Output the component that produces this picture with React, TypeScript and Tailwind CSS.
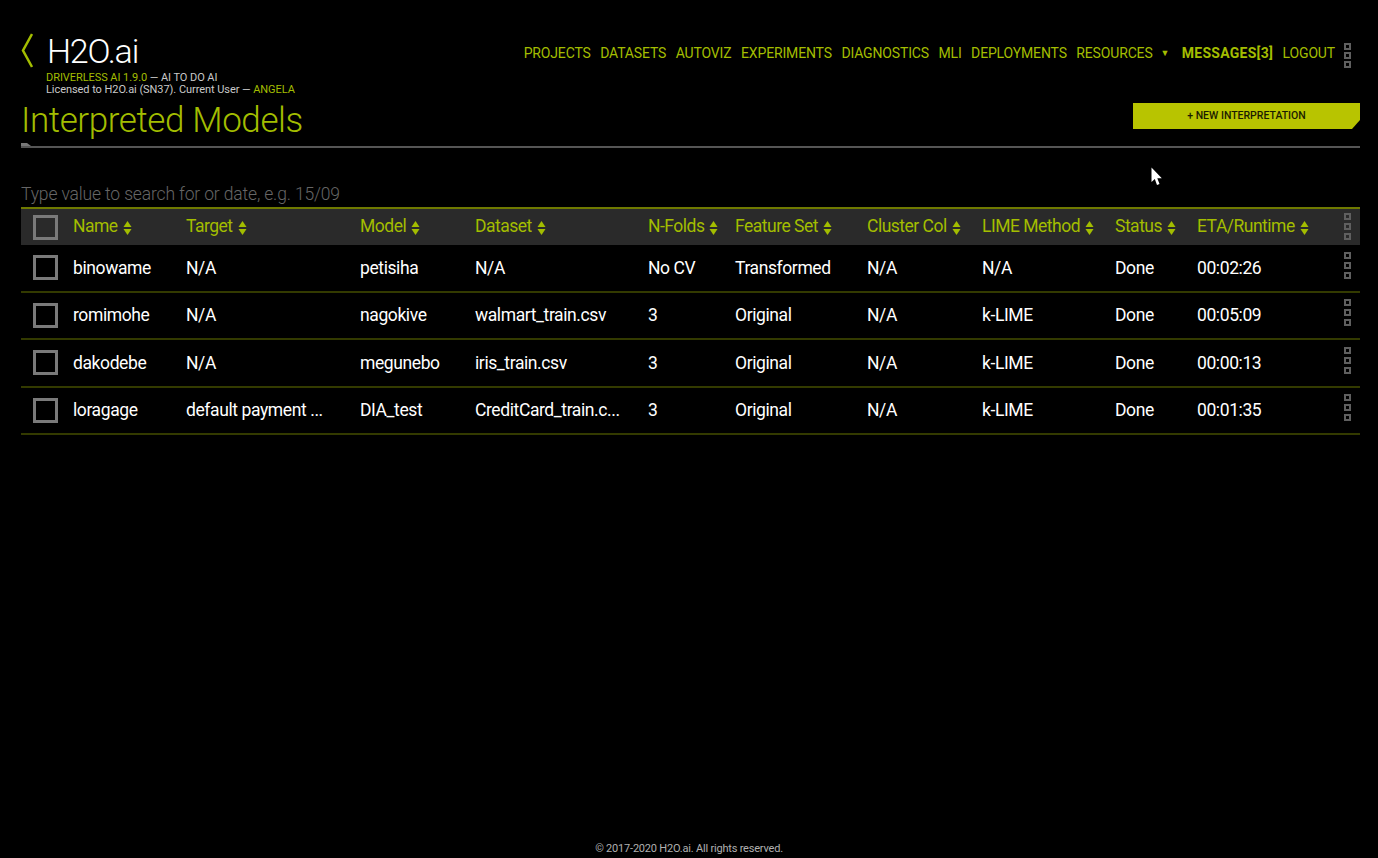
import React from 'react';

const headers = ['Name', 'Target', 'Model', 'Dataset', 'N-Folds', 'Feature Set', 'Cluster Col', 'LIME Method', 'Status', 'ETA/Runtime'];

const rows = [
  ['binowame', 'N/A', 'petisiha', 'N/A', 'No CV', 'Transformed', 'N/A', 'N/A', 'Done', '00:02:26'],
  ['romimohe', 'N/A', 'nagokive', 'walmart_train.csv', '3', 'Original', 'N/A', 'k-LIME', 'Done', '00:05:09'],
  ['dakodebe', 'N/A', 'megunebo', 'iris_train.csv', '3', 'Original', 'N/A', 'k-LIME', 'Done', '00:00:13'],
  ['loragage', 'default payment ...', 'DIA_test', 'CreditCard_train.c...', '3', 'Original', 'N/A', 'k-LIME', 'Done', '00:01:35'],
];

const navItems = ['PROJECTS', 'DATASETS', 'AUTOVIZ', 'EXPERIMENTS', 'DIAGNOSTICS', 'MLI', 'DEPLOYMENTS'];

const gridCols = 'grid grid-cols-[52px_113px_174px_115px_173px_87px_132px_115px_133px_82px_147px_1fr] items-center';

const KebabSquares: React.FC<{ gap?: string }> = ({ gap = 'gap-[3px]' }) => (
  <div className={`flex flex-col ${gap}`}>
    <span className="block size-[7px] border-2 border-[#5f5f5f]" />
    <span className="block size-[7px] border-2 border-[#5f5f5f]" />
    <span className="block size-[7px] border-2 border-[#5f5f5f]" />
  </div>
);

const SortArrows: React.FC = () => (
  <svg width="9" height="16" viewBox="0 0 9 16" className="ml-[5px] mt-[3px] shrink-0 fill-[#a3bd00]">
    <path d="M4.5 1 L8.5 7 H0.5 Z" />
    <path d="M4.5 15 L8.5 9 H0.5 Z" />
  </svg>
);

const App: React.FC = () => {
  return (
    <div className="relative h-[858px] w-full overflow-hidden bg-black pl-[21px] pr-[18px] font-['Roboto',sans-serif] text-white">
      <header className="flex h-[103px] items-start justify-between">
        <div className="pt-[33px]">
          <div className="flex items-center">
            <svg width="12" height="36" viewBox="0 0 12 36" className="fill-none stroke-[#a3bd00] stroke-[2.5]">
              <path d="M11 1 L2 17.5 L11 34" />
            </svg>
            <span className="ml-[14px] text-[34px] font-light leading-[36px] tracking-[-1.2px] text-white">H2O.ai</span>
          </div>
          <div className="ml-[25px] mt-[3px] text-[11px] leading-[12px] tracking-[-0.06px] text-[#c9c9c9]">
            <div><span className="text-[#a3bd00]">DRIVERLESS AI 1.9.0</span> — AI TO DO AI</div>
            <div>Licensed to H2O.ai (SN37). Current User — <span className="text-[#a3bd00]">ANGELA</span></div>
          </div>
        </div>
        <nav className="flex items-start pt-[43px] text-[14px] leading-[20px] tracking-[-0.15px] text-[#a3bd00]">
          <div className="flex gap-[9.5px]">
            {navItems.map(item => <a key={item}>{item}</a>)}
            <a className="flex items-center">RESOURCES<span className="ml-[8px] text-[9px]">▼</span></a>
            <a className="ml-[3px] font-bold tracking-[0.25px]">MESSAGES[3]</a>
            <a>LOGOUT</a>
          </div>
          <div className="ml-[9px] w-[16px]"><KebabSquares gap="gap-[2px]" /></div>
        </nav>
      </header>

      <section className="flex h-[43px] items-start justify-between">
        <h1 className="text-[35px] font-light leading-[36px] tracking-[-0.4px] text-[#a3bd00]">Interpreted Models</h1>
        <button className="flex h-[26px] w-[227px] items-center justify-center bg-[#b8c400] text-[10.5px] font-medium text-[#1c1c00] [clip-path:polygon(0_0,100%_0,100%_65%,calc(100%-8px)_100%,0_100%)]">
          + NEW INTERPRETATION
        </button>
      </section>

      <div className="relative h-[2px] bg-[#555555]">
        <span className="absolute -top-[3px] left-0 h-[3px] w-[10px] bg-[#777777] [clip-path:polygon(0_0,60%_0,100%_100%,0_100%)]" />
      </div>

      <input
        placeholder="Type value to search for or date, e.g. 15/09"
        className="mt-[36px] h-[21px] w-full bg-transparent text-[17.5px] font-light leading-[21px] tracking-[-0.15px] outline-none placeholder:text-[#666666]"
      />

      <div className={`${gridCols} h-[38px] border-t-2 border-[#6f7a00] bg-[#2a2a2a] text-[17.5px] tracking-[-0.5px] text-[#a3bd00]`}>
        <span className="ml-[12px] block size-[25px] border-[3px] border-[#7a7a7a]" />
        {headers.map(h => (
          <div key={h} className="-mt-[2px] flex items-center">
            {h}
            <SortArrows />
          </div>
        ))}
        <div className="-mt-[2px]"><KebabSquares /></div>
      </div>

      {rows.map(row => (
        <div key={row[0]} className={`${gridCols} h-[47.5px] border-b-2 border-[#333a00] text-[17.5px] tracking-[-0.4px]`}>
          <span className="ml-[12px] block size-[25px] border-[3px] border-[#7a7a7a]" />
          {row.map((cell, i) => (
            <div key={i} className="whitespace-nowrap">{cell}</div>
          ))}
          <div className="-mt-[5px]"><KebabSquares /></div>
        </div>
      ))}

      <footer className="absolute bottom-[2px] left-0 right-0 text-center text-[11px] leading-[14px] tracking-[-0.2px] text-[#b0b0b0]">
        © 2017-2020 H2O.ai. All rights reserved.
      </footer>

      {/* pointer captured in the screenshot */}
      <svg width="12" height="21" viewBox="0 0 12 21" className="absolute left-[1151px] top-[167px] fill-white">
        <path d="M0.5 0.5 V15 L3.8 12 L6 18 L8.5 17 L6.3 11.2 H10.8 Z" />
      </svg>
    </div>
  );
};

export default App;
